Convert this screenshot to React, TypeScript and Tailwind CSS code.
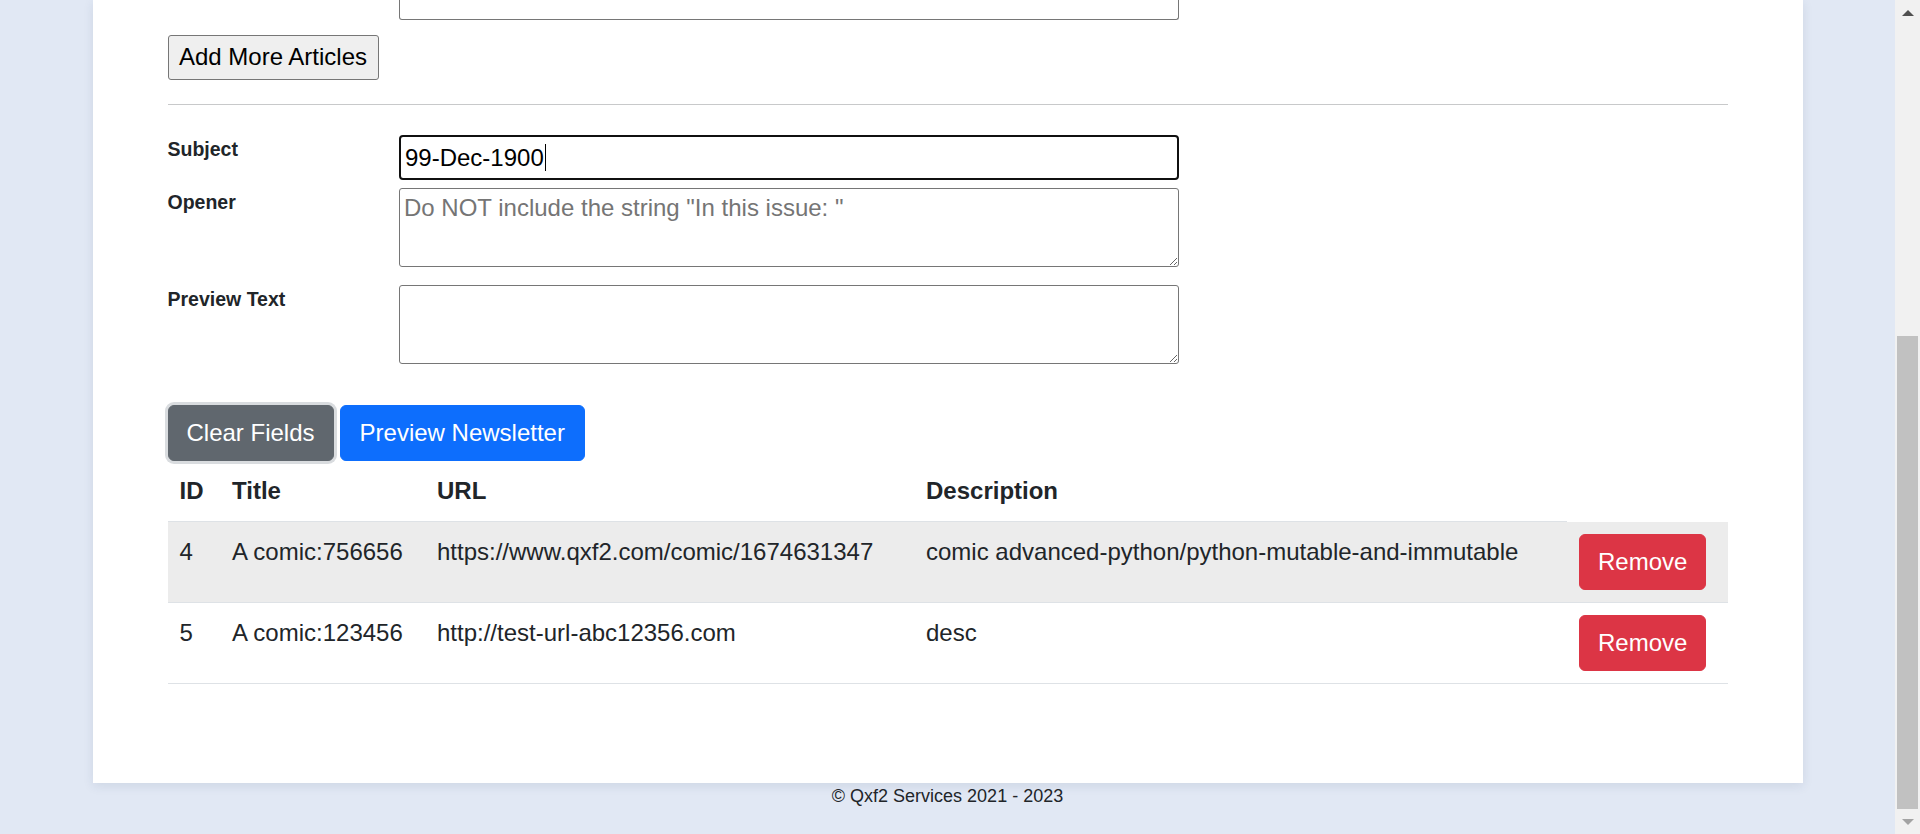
import React from "react";

const font = { fontFamily: '"Liberation Sans", Arial, sans-serif' };

function Row({ label, children, className }: { label: string; children: React.ReactNode; className?: string }) {
  return (
    <div className={"flex items-start " + (className ?? "")}>
      <label className="w-[231.5px] shrink-0 pt-[1px] text-[19.5px] leading-[27px] font-bold text-[#212529]">{label}</label>
      {children}
    </div>
  );
}

const rows = [
  {
    id: "4",
    title: "A comic:756656",
    url: "https://www.qxf2.com/comic/1674631347",
    desc: "comic advanced-python/python-mutable-and-immutable",
    striped: true,
  },
  {
    id: "5",
    title: "A comic:123456",
    url: "http://test-url-abc12356.com",
    desc: "desc",
    striped: false,
  },
];

export default function App() {
  return (
    <div className="flex h-[834px] w-[1920px] overflow-hidden bg-[#e1e8f4]" style={font}>
      <div className="flex flex-1 flex-col items-center overflow-hidden">
        <div className="w-[1710px] bg-white px-[75px] pb-[99px] shadow-[0_3px_10px_rgba(40,60,100,0.10)]">
          {/* fragment of previous field, scrolled off the top */}
          <div className="ml-[231.5px] h-[20px] w-[780px] rounded-b-[3px] border-x border-b border-[#767676]" />

          <button className="mt-[15px] flex h-[45px] w-[211px] items-center justify-center rounded-[3px] border border-[#767676] bg-[#efefef] pb-[2px] text-[24px] text-black">
            Add More Articles
          </button>

          <div className="mt-[24px] h-px w-full bg-[#c8c9ca]" />

          <Row label="Subject" className="mt-[30px]">
            <div className="flex h-[45px] w-[780px] items-center rounded-[4px] border-2 border-[#101010] pl-[4px] text-[24px] text-black">
              <span>99-Dec-1900</span>
              <span className="ml-[1px] inline-block h-[27px] w-[1px] bg-black" />
            </div>
          </Row>

          <Row label="Opener" className="mt-[8px]">
            <textarea
              className="block h-[79px] w-[780px] rounded-[3px] border border-[#767676] pl-[4px] pr-[3px] pt-[3px] text-[24px] leading-[31px] text-black placeholder:text-[#757575] outline-none"
              placeholder={'Do NOT include the string "In this issue: "'}
            />
          </Row>

          <Row label="Preview Text" className="mt-[18px]">
            <textarea className="block h-[79px] w-[780px] rounded-[3px] border border-[#767676] pl-[4px] pr-[3px] pt-[3px] text-[24px] leading-[31px] text-black outline-none" />
          </Row>

          <div className="mt-[41px] flex gap-[6px]">
            <button className="rounded-[6px] border border-[#60676e] bg-[#60676e] px-[18px] py-[9px] text-[24px] leading-[36px] text-white shadow-[0_0_0_3px_#d9dcdf]">
              Clear Fields
            </button>
            <button className="rounded-[6px] border border-[#0d6efd] bg-[#0d6efd] px-[19px] py-[9px] text-[24px] leading-[36px] text-white">
              Preview Newsletter
            </button>
          </div>

          <table className="w-full table-fixed border-collapse text-[24px] leading-[36px] text-[#212529]">
            <colgroup>
              <col className="w-[52.5px]" />
              <col className="w-[205px]" />
              <col className="w-[489px]" />
              <col className="w-[653px]" />
              <col className="w-[161px]" />
            </colgroup>
            <thead>
              <tr>
                <th className="border-b border-[#dee2e6] p-[12px] text-left align-top font-bold">ID</th>
                <th className="border-b border-[#dee2e6] p-[12px] text-left align-top font-bold">Title</th>
                <th className="border-b border-[#dee2e6] p-[12px] text-left align-top font-bold">URL</th>
                <th className="border-b border-[#dee2e6] p-[12px] text-left align-top font-bold">Description</th>
              </tr>
            </thead>
            <tbody>
              {rows.map((r) => {
                const cell =
                  "border-b border-[#dee2e6] p-[12px] align-top font-normal " + (r.striped ? "bg-[#ececec]" : "bg-white");
                return (
                  <tr key={r.id}>
                    <td className={cell}>{r.id}</td>
                    <td className={cell + " whitespace-nowrap"}>{r.title}</td>
                    <td className={cell + " whitespace-nowrap"}>{r.url}</td>
                    <td className={cell + " whitespace-nowrap"}>{r.desc}</td>
                    <td className={cell}>
                      <button className="rounded-[6px] border border-[#dc3545] bg-[#dc3545] px-[18px] py-[9px] text-[24px] leading-[36px] text-white">
                        Remove
                      </button>
                    </td>
                  </tr>
                );
              })}
            </tbody>
          </table>
        </div>
        <footer className="text-center text-[18px] leading-[27px] text-[#212529]">© Qxf2 Services 2021 - 2023</footer>
      </div>

      {/* browser scrollbar */}
      <div className="flex w-[25px] shrink-0 flex-col bg-[#f1f1f1]">
        <div className="flex h-[25px] items-center justify-center">
          <svg width="12" height="6" viewBox="0 0 12 6">
            <polygon points="0,6 6,0 12,6" fill="#505050" />
          </svg>
        </div>
        <div className="flex flex-1 flex-col px-[2px] pt-[311px]">
          <div className="flex-1 bg-[#c1c1c1]" />
        </div>
        <div className="flex h-[25px] items-center justify-center">
          <svg width="12" height="6" viewBox="0 0 12 6">
            <polygon points="0,0 12,0 6,6" fill="#a3a3a3" />
          </svg>
        </div>
      </div>
    </div>
  );
}
